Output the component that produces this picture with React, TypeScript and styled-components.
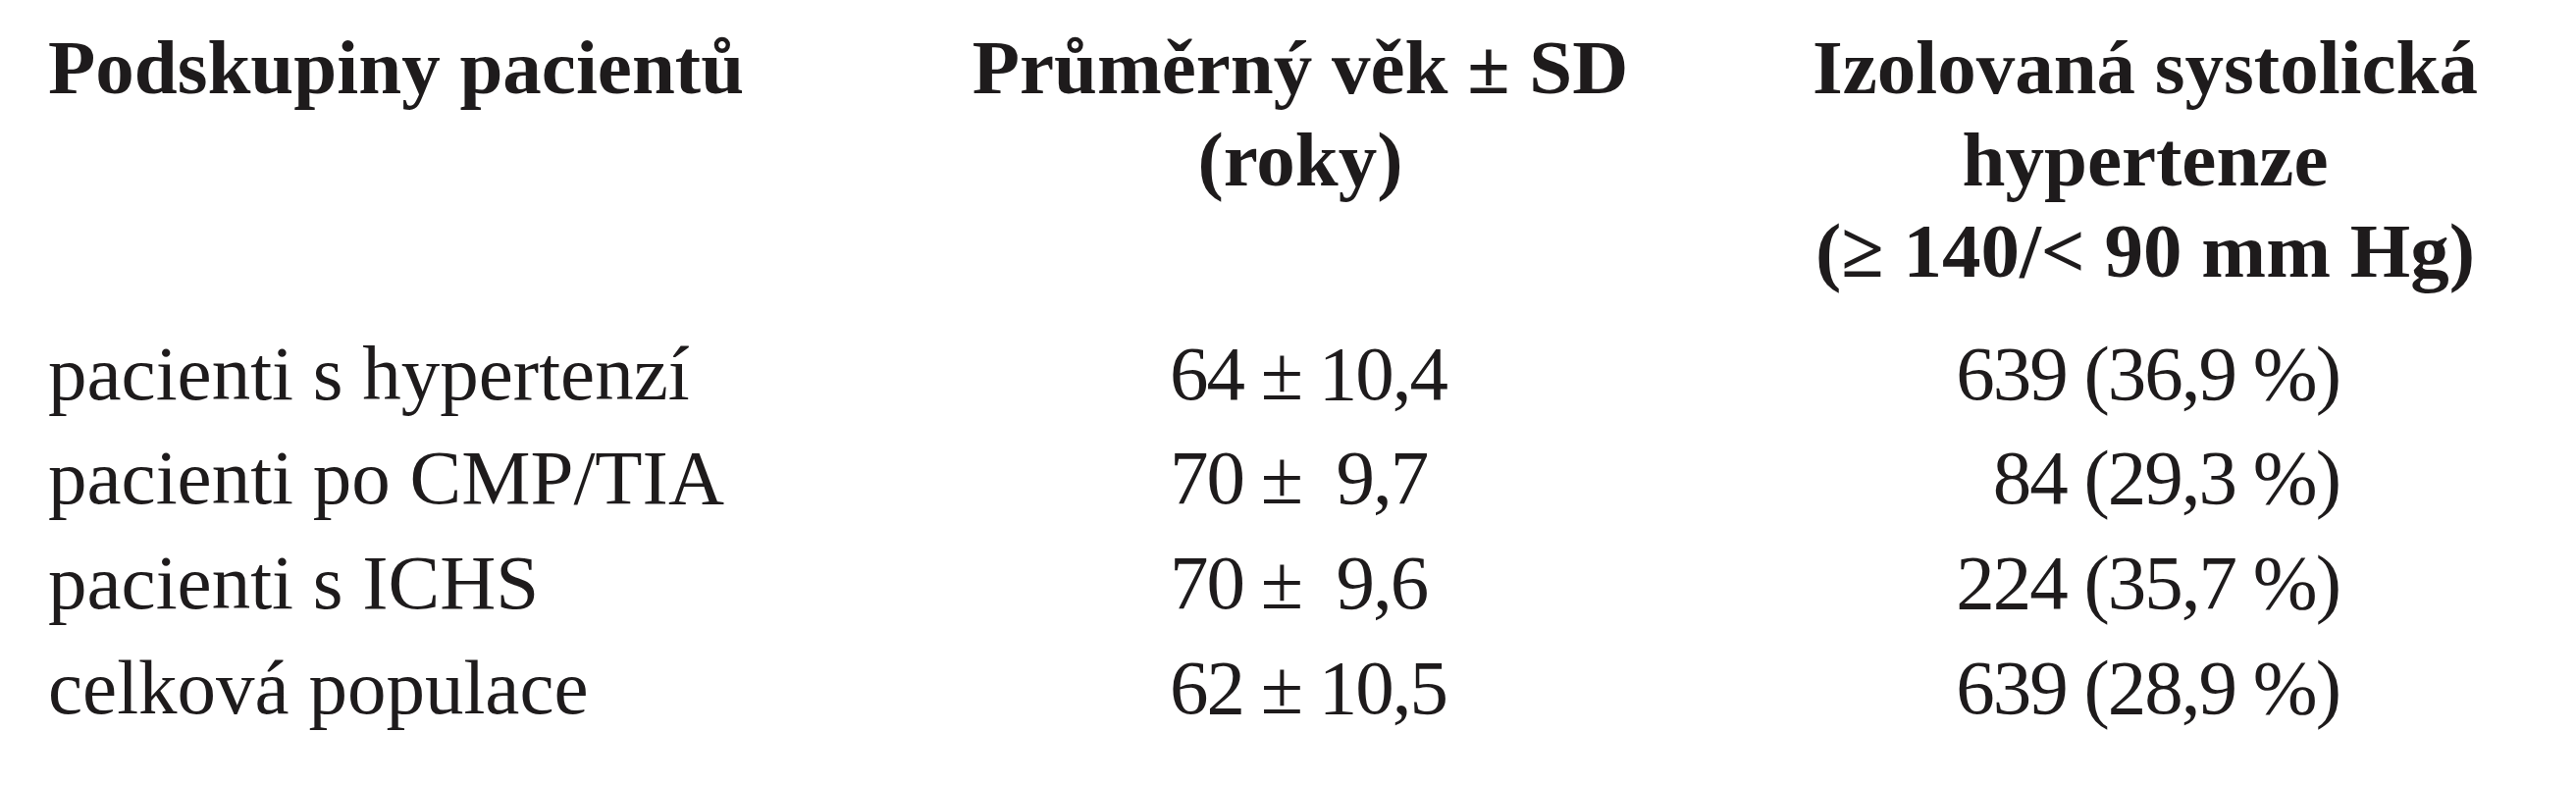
import React from "react";
import styled, { createGlobalStyle } from "styled-components";

const GlobalStyle = createGlobalStyle`
  html, body {
    margin: 0;
    padding: 0;
    background: #ffffff;
  }
`;

const Table = styled.div`
  display: grid;
  grid-template-columns: 846px 860px 862px;
  padding: 22px 0 0 49px;
  font-family: "Liberation Serif", "Times New Roman", serif;
  font-size: 79px;
  color: #1e1b1c;
  width: 2568px;
`;

const HeaderCell = styled.div<{ $align: "left" | "center" }>`
  font-weight: 700;
  line-height: 93.5px;
  text-align: ${(p) => p.$align};
  padding-bottom: 25px;
`;

const HeaderLine = styled.span`
  display: block;
  white-space: pre;
`;

const BodyCell = styled.div<{
  $align: "left" | "right";
  $padLeft?: number;
  $padRight?: number;
  $numeric?: boolean;
}>`
  line-height: 106.7px;
  white-space: pre;
  text-align: ${(p) => p.$align};
  padding-left: ${(p) => p.$padLeft ?? 0}px;
  padding-right: ${(p) => p.$padRight ?? 0}px;
  letter-spacing: ${(p) => (p.$numeric ? "-2px" : "0")};
`;

const rows = [
  { group: "pacienti s hypertenzí", age: "64 ± 10,4", ish: "639 (36,9 %)" },
  { group: "pacienti po CMP/TIA", age: "70 ±  9,7", ish: "84 (29,3 %)" },
  { group: "pacienti s ICHS", age: "70 ±  9,6", ish: "224 (35,7 %)" },
  { group: "celková populace", age: "62 ± 10,5", ish: "639 (28,9 %)" },
];

export default function App() {
  return (
    <>
      <GlobalStyle />
      <Table>
        <HeaderCell $align="left">
          <HeaderLine>Podskupiny pacientů</HeaderLine>
        </HeaderCell>
        <HeaderCell $align="center">
          <HeaderLine>Průměrný věk ± SD</HeaderLine>
          <HeaderLine>(roky)</HeaderLine>
        </HeaderCell>
        <HeaderCell $align="center">
          <HeaderLine>Izolovaná systolická</HeaderLine>
          <HeaderLine>hypertenze</HeaderLine>
          <HeaderLine>(≥ 140/&lt; 90 mm Hg)</HeaderLine>
        </HeaderCell>
        {rows.map((r) => (
          <React.Fragment key={r.group}>
            <BodyCell $align="left">{r.group}</BodyCell>
            <BodyCell $align="left" $padLeft={297} $numeric>
              {r.age}
            </BodyCell>
            <BodyCell $align="right" $padRight={233} $numeric>
              {r.ish}
            </BodyCell>
          </React.Fragment>
        ))}
      </Table>
    </>
  );
}
